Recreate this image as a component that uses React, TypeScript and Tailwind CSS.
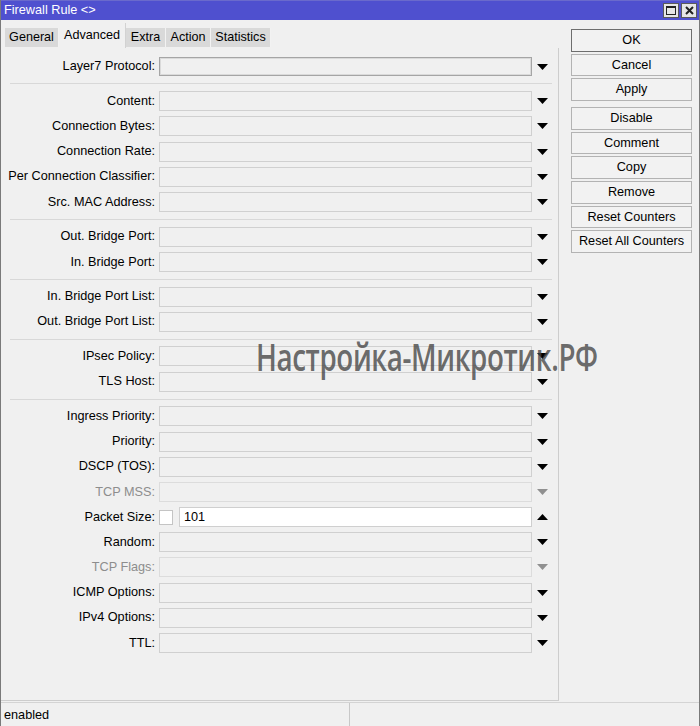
import React from "react";

type Row = {
  label: string;
  disabled?: boolean;
  focused?: boolean;
  packet?: boolean;
};

const groups: Row[][] = [
  [{ label: "Layer7 Protocol:", focused: true }],
  [
    { label: "Content:" },
    { label: "Connection Bytes:" },
    { label: "Connection Rate:" },
    { label: "Per Connection Classifier:" },
    { label: "Src. MAC Address:" },
  ],
  [{ label: "Out. Bridge Port:" }, { label: "In. Bridge Port:" }],
  [{ label: "In. Bridge Port List:" }, { label: "Out. Bridge Port List:" }],
  [{ label: "IPsec Policy:" }, { label: "TLS Host:" }],
  [
    { label: "Ingress Priority:" },
    { label: "Priority:" },
    { label: "DSCP (TOS):" },
    { label: "TCP MSS:", disabled: true },
    { label: "Packet Size:", packet: true },
    { label: "Random:" },
    { label: "TCP Flags:", disabled: true },
    { label: "ICMP Options:" },
    { label: "IPv4 Options:" },
    { label: "TTL:" },
  ],
];

function Arrow({ up, disabled }: { up?: boolean; disabled?: boolean }) {
  const color = disabled ? "#909090" : "#000000";
  return (
    <svg width="11" height="6" viewBox="0 0 11 6" className="shrink-0">
      {up ? (
        <polygon points="0,6 11,6 5.5,0" fill={color} />
      ) : (
        <polygon points="0,0 11,0 5.5,6" fill={color} />
      )}
    </svg>
  );
}

function FieldRow({ row }: { row: Row }) {
  return (
    <div className="flex items-center h-[25.2px]">
      <div
        className={`w-[154px] text-right whitespace-nowrap ${
          row.disabled ? "text-[#8d8d8d]" : "text-black"
        }`}
      >
        {row.label}
      </div>
      <div className="ml-[4px] flex items-center w-[373px]">
        {row.packet ? (
          <>
            <div className="w-[14px] h-[15px] bg-white border border-[#c4c4c4] shrink-0" />
            <div className="ml-[6px] flex-1 h-[20px] bg-white border border-[#cfcfcf] flex items-center pl-[4px] text-black">
              101
            </div>
          </>
        ) : row.focused ? (
          <div className="w-full h-[19px] border border-[#a5a5a5] bg-[#f0f0f0] shadow-[inset_0_0_0_1px_#dadada]" />
        ) : (
          <div
            className={`w-full h-[20px] border bg-[#f0f0f0] ${
              row.disabled ? "border-[#dcdcdc]" : "border-[#d0d0d0]"
            }`}
          />
        )}
      </div>
      <div className="ml-[5px] flex items-center">
        <Arrow up={row.packet} disabled={row.disabled} />
      </div>
    </div>
  );
}

const tabs = [
  { name: "General", w: "w-[54px]" },
  { name: "Advanced", w: "w-[67px]" },
  { name: "Extra", w: "w-[40px]" },
  { name: "Action", w: "w-[45px]" },
  { name: "Statistics", w: "w-[60px]" },
];

const buttons1 = ["OK", "Cancel", "Apply"];
const buttons2 = ["Disable", "Comment", "Copy", "Remove", "Reset Counters", "Reset All Counters"];

export default function App() {
  return (
    <div
      className="relative w-[700px] h-[726px] bg-[#f0f0f0] border-l border-r border-[#7a7a7a] overflow-hidden flex flex-col text-[12.7px] leading-none"
      style={{ fontFamily: '"Liberation Sans", Arial, sans-serif' }}
    >
      {/* Title bar */}
      <div className="h-[20px] bg-[#4f50cf] flex items-center justify-between shrink-0 border-t border-[#6a6acc]">
        <span className="text-white pl-[3px] text-[12.7px]">Firewall Rule &lt;&gt;</span>
        <div className="flex items-center gap-[2px] pr-[2px]">
          <div className="w-[16px] h-[15px] bg-[#e6e6e6] border border-[#5a5a5a] flex items-center justify-center">
            <div className="w-[10px] h-[9px] border border-[#222] border-t-2" />
          </div>
          <div className="w-[16px] h-[15px] bg-[#e6e6e6] border border-[#5a5a5a] flex items-center justify-center">
            <svg width="9" height="9" viewBox="0 0 9 9">
              <path d="M1 1 L8 8 M8 1 L1 8" stroke="#222" strokeWidth="2" />
            </svg>
          </div>
        </div>
      </div>

      {/* Main */}
      <div className="flex flex-1 min-h-0">
        <div className="w-[558px] flex flex-col shrink-0">
          {/* Tabs */}
          <div className="h-[28px] flex items-end pl-[4px] shrink-0 text-[12.6px]">
            {tabs.map((t) =>
              t.name === "Advanced" ? (
                <div
                  key={t.name}
                  className={`${t.w} h-[25px] bg-[#f0f0f0] border-r border-[#d2d2d2] flex justify-center items-start pt-[6px] text-black`}
                >
                  {t.name}
                </div>
              ) : (
                <div
                  key={t.name}
                  className={`${t.w} h-[19px] bg-[#d9d9d9] border-r border-[#f2f2f2] flex justify-center items-center text-black mb-[1px]`}
                >
                  {t.name}
                </div>
              )
            )}
          </div>
          {/* Panel */}
          <div className="flex-1 border-r border-b border-[#cdcdcd] pt-[6px]">
            {groups.map((g, gi) => (
              <div key={gi}>
                {gi > 0 && (
                  <div className="h-[9.5px] flex items-center pl-[9px] pr-[6px]">
                    <div className="h-[1px] w-full bg-[#d8d8d8]" />
                  </div>
                )}
                {g.map((r) => (
                  <FieldRow key={r.label} row={r} />
                ))}
              </div>
            ))}
          </div>
        </div>

        {/* Buttons */}
        <div className="flex-1 pt-[9px] pl-[12px] flex flex-col gap-[2.2px]">
          {buttons1.map((b) => (
            <div
              key={b}
              className={`w-[121px] h-[22.5px] flex items-center justify-center bg-[#f2f2f2] border ${
                b === "OK" ? "border-[#6e6e6e]" : "border-[#b3b3b3]"
              } text-black`}
            >
              {b}
            </div>
          ))}
          <div className="h-[1.8px]" />
          {buttons2.map((b) => (
            <div
              key={b}
              className="w-[121px] h-[22.5px] flex items-center justify-center bg-[#f2f2f2] border border-[#b3b3b3] text-black"
            >
              {b}
            </div>
          ))}
        </div>
      </div>

      {/* Status bar */}
      <div className="h-[24px] shrink-0 flex border-t border-[#d4d4d4] mt-[1px]">
        <div className="w-[349px] border-r border-[#c8c8c8] flex items-center pl-[3px] pt-[1px] text-black">
          enabled
        </div>
        <div className="flex-1" />
      </div>

      {/* Watermark */}
      <div
        className="absolute left-[255px] top-[338px] text-[37px] font-semibold leading-none whitespace-nowrap text-[rgba(70,70,70,0.8)] pointer-events-none tracking-[-0.5px] origin-left scale-x-[0.75]"
        style={{ fontFamily: '"Open Sans", "Noto Sans", sans-serif' }}
      >
        Настройка-Микротик.РФ
      </div>
    </div>
  );
}
